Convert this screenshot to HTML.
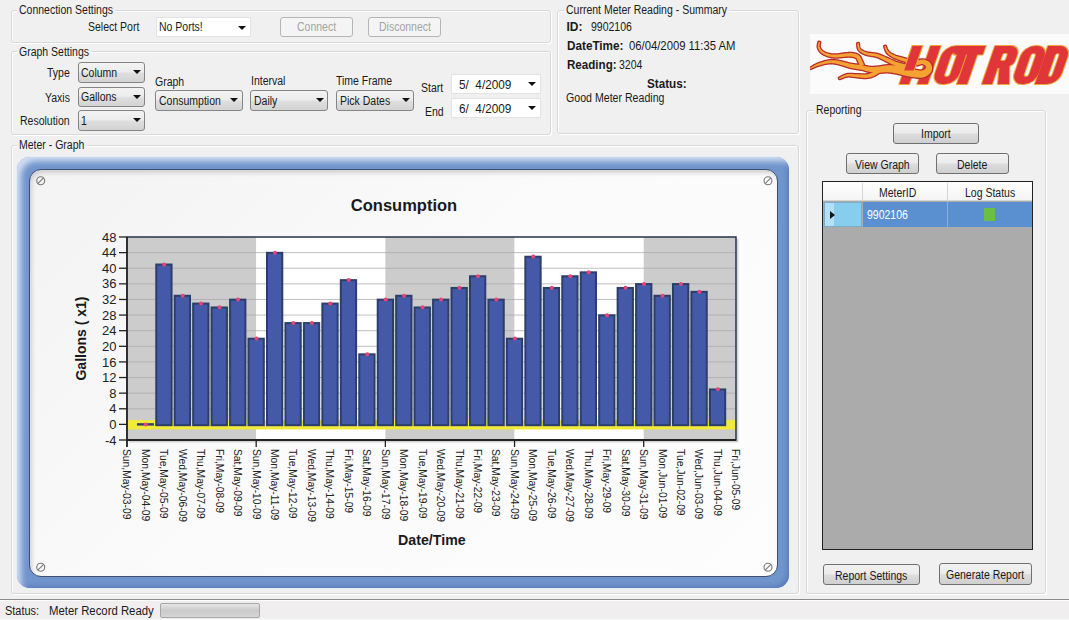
<!DOCTYPE html>
<html><head><meta charset="utf-8">
<style>
*{box-sizing:border-box;margin:0;padding:0}
html,body{width:1069px;height:620px;overflow:hidden;background:#f0f0f0;font-family:"Liberation Sans",sans-serif;font-size:12px;color:#1a1a1a}
.a{position:absolute}
.grp{position:absolute;border:1px solid #d8d8d8;border-radius:3px;box-shadow:inset 1px 1px 0 #fff, 1px 1px 0 #fff}
.t{position:absolute;white-space:nowrap;line-height:12px;transform-origin:0 0}
.cb{position:absolute;border:1px solid #858585;border-radius:3px;background:linear-gradient(#f3f3f3,#ececec 45%,#dedede 55%,#d3d3d3);}
.cbw{position:absolute;border:1px solid #e3e3e3;background:#fff}
.arr{position:absolute;width:0;height:0;border-left:4px solid transparent;border-right:4px solid transparent;border-top:4.5px solid #111}
.btn{position:absolute;border:1px solid #707070;border-radius:3px;background:linear-gradient(#f2f2f2,#ebebeb 48%,#dddddd 52%,#cfcfcf)}
.btnd{position:absolute;border:1px solid #b5b5b5;border-radius:3px;background:#f4f4f4}
</style></head><body>
<div class="grp" style="left:11px;top:10px;width:540px;height:33px;"></div>
<div class="grp" style="left:11px;top:51px;width:540px;height:84px;"></div>
<div class="grp" style="left:557px;top:10px;width:242px;height:124px;"></div>
<div class="grp" style="left:11px;top:145px;width:788px;height:449px;"></div>
<div class="grp" style="left:806px;top:110px;width:240px;height:484px;"></div>
<div class="a" style="left:16.8px;top:3.7px;width:98.0px;height:12px;background:#f0f0f0"></div>
<div class="t" style="left:18.80px;top:4.20px;transform:scaleX(0.875)">Connection Settings</div>
<div class="a" style="left:17.0px;top:45.8px;width:74.0px;height:12px;background:#f0f0f0"></div>
<div class="t" style="left:19.00px;top:46.30px;transform:scaleX(0.875)">Graph Settings</div>
<div class="a" style="left:563.8px;top:3.9px;width:165.0px;height:12px;background:#f0f0f0"></div>
<div class="t" style="left:565.80px;top:4.40px;transform:scaleX(0.875)">Current Meter Reading - Summary</div>
<div class="a" style="left:17.4px;top:138.8px;width:69.3px;height:12px;background:#f0f0f0"></div>
<div class="t" style="left:19.40px;top:139.30px;transform:scaleX(0.875)">Meter - Graph</div>
<div class="a" style="left:813.6px;top:103.9px;width:49.5px;height:12px;background:#f0f0f0"></div>
<div class="t" style="left:815.60px;top:104.40px;transform:scaleX(0.875)">Reporting</div>
<div class="t" style="left:88.00px;top:21.10px;transform:scaleX(0.875)">Select Port</div>
<div class="cbw" style="left:156px;top:17px;width:95px;height:20px;"></div>
<div class="t" style="left:159.20px;top:21.10px;transform:scaleX(0.875)">No Ports!</div>
<div class="arr" style="left:238.4px;top:25.6px;border-top-color:#111"></div>
<div class="btnd" style="left:280px;top:17px;width:73px;height:20px;"></div>
<div class="t" style="left:296.95px;top:21.00px;transform:scaleX(0.875);color:#a3a3a3">Connect</div>
<div class="btnd" style="left:368px;top:17px;width:73px;height:20px;"></div>
<div class="t" style="left:378.53px;top:21.00px;transform:scaleX(0.875);color:#a3a3a3">Disconnect</div>
<div class="t" style="left:47.44px;top:66.90px;transform:scaleX(0.875)">Type</div>
<div class="t" style="left:45.30px;top:91.90px;transform:scaleX(0.875)">Yaxis</div>
<div class="t" style="left:20.18px;top:115.20px;transform:scaleX(0.875)">Resolution</div>
<div class="cb" style="left:78px;top:62px;width:67px;height:21px;"></div>
<div class="t" style="left:81.40px;top:66.90px;transform:scaleX(0.875)">Column</div>
<div class="arr" style="left:132.5px;top:70.3px;border-top-color:#111"></div>
<div class="cb" style="left:78px;top:87px;width:67px;height:20px;"></div>
<div class="t" style="left:81.40px;top:90.90px;transform:scaleX(0.875)">Gallons</div>
<div class="arr" style="left:132.5px;top:94.8px;border-top-color:#111"></div>
<div class="cb" style="left:78px;top:110px;width:67px;height:21px;"></div>
<div class="t" style="left:81.40px;top:114.90px;transform:scaleX(0.875)">1</div>
<div class="arr" style="left:132.5px;top:118.3px;border-top-color:#111"></div>
<div class="t" style="left:154.80px;top:75.50px;transform:scaleX(0.875)">Graph</div>
<div class="cb" style="left:155px;top:90px;width:88px;height:21px;"></div>
<div class="t" style="left:158.60px;top:95.00px;transform:scaleX(0.875)">Consumption</div>
<div class="arr" style="left:230.2px;top:98.3px;border-top-color:#111"></div>
<div class="t" style="left:250.50px;top:75.00px;transform:scaleX(0.875)">Interval</div>
<div class="cb" style="left:250px;top:90px;width:78px;height:21px;"></div>
<div class="t" style="left:254.00px;top:95.00px;transform:scaleX(0.875)">Daily</div>
<div class="arr" style="left:315.5px;top:98.3px;border-top-color:#111"></div>
<div class="t" style="left:336.40px;top:75.00px;transform:scaleX(0.875)">Time Frame</div>
<div class="cb" style="left:336px;top:90px;width:78px;height:21px;"></div>
<div class="t" style="left:340.00px;top:95.00px;transform:scaleX(0.875)">Pick Dates</div>
<div class="arr" style="left:401.5px;top:98.3px;border-top-color:#111"></div>
<div class="t" style="left:421.44px;top:81.80px;transform:scaleX(0.875)">Start</div>
<div class="t" style="left:424.92px;top:105.80px;transform:scaleX(0.875)">End</div>
<div class="cbw" style="left:451px;top:74px;width:90px;height:20px;"></div>
<div class="t" style="left:458.60px;top:78.90px;transform:scaleX(0.98)">5/&nbsp; 4/2009</div>
<div class="arr" style="left:527.5px;top:81.8px;border-top-color:#111"></div>
<div class="cbw" style="left:451px;top:98px;width:90px;height:20px;"></div>
<div class="t" style="left:458.60px;top:102.80px;transform:scaleX(0.98)">6/&nbsp; 4/2009</div>
<div class="arr" style="left:527.5px;top:105.8px;border-top-color:#111"></div>
<div class="t" style="left:566.50px;top:20.90px;transform:scaleX(1.0);font-weight:bold">ID:</div>
<div class="t" style="left:590.90px;top:20.90px;transform:scaleX(0.875)">9902106</div>
<div class="t" style="left:566.50px;top:40.40px;transform:scaleX(0.977);font-weight:bold">DateTime:</div>
<div class="t" style="left:629.00px;top:40.40px;transform:scaleX(0.94)">06/04/2009 11:35 AM</div>
<div class="t" style="left:566.50px;top:59.10px;transform:scaleX(0.966);font-weight:bold">Reading:</div>
<div class="t" style="left:619.30px;top:59.10px;transform:scaleX(0.875)">3204</div>
<div class="t" style="left:647.30px;top:78.00px;transform:scaleX(0.974);font-weight:bold">Status:</div>
<div class="t" style="left:565.80px;top:92.20px;transform:scaleX(0.884)">Good Meter Reading</div>
<div class="btn" style="left:893px;top:123px;width:86px;height:21px;"></div>
<div class="t" style="left:921.12px;top:128.30px;transform:scaleX(0.875)">Import</div>
<div class="btn" style="left:846px;top:153px;width:73px;height:21px;"></div>
<div class="t" style="left:855.17px;top:158.50px;transform:scaleX(0.875)">View Graph</div>
<div class="btn" style="left:936px;top:153px;width:73px;height:21px;"></div>
<div class="t" style="left:957.32px;top:158.50px;transform:scaleX(0.875)">Delete</div>
<div class="a" style="left:822px;top:181px;width:211px;height:369px;background:#ababab;border:1px solid #222"></div>
<div class="a" style="left:823px;top:182px;width:209px;height:19px;background:linear-gradient(#ffffff,#f4f4f4);border-bottom:1px solid #d5d5d5"></div>
<div class="a" style="left:862px;top:183px;width:1px;height:17px;background:#d5d5d5"></div>
<div class="a" style="left:947px;top:183px;width:1px;height:17px;background:#d5d5d5"></div>
<div class="t" style="left:878.50px;top:187.40px;transform:scaleX(0.875)">MeterID</div>
<div class="t" style="left:964.80px;top:187.40px;transform:scaleX(0.875)">Log Status</div>
<div class="a" style="left:824px;top:202px;width:38px;height:25px;background:#86cdee;border:1px solid #7aaec8"></div>
<div class="a" style="left:825px;top:203px;width:9px;height:23px;background:#b2e0f6"></div>
<div class="a" style="left:830px;top:210.5px;width:0;height:0;border-top:4.5px solid transparent;border-bottom:4.5px solid transparent;border-left:5.5px solid #151515"></div>
<div class="a" style="left:863px;top:202px;width:169px;height:25px;background:#5a90d0"></div>
<div class="a" style="left:947px;top:202px;width:1px;height:25px;background:#8ab0dc"></div>
<div class="t" style="left:866.70px;top:209.30px;transform:scaleX(0.875);color:#fff">9902106</div>
<div class="a" style="left:984px;top:208px;width:11px;height:13px;background:#6cbf45"></div>
<div class="btn" style="left:823px;top:564px;width:97px;height:21px;"></div>
<div class="t" style="left:835.32px;top:569.60px;transform:scaleX(0.875)">Report Settings</div>
<div class="btn" style="left:939px;top:563px;width:93px;height:22px;"></div>
<div class="t" style="left:946.41px;top:568.90px;transform:scaleX(0.875)">Generate Report</div>
<div class="a" style="left:0px;top:599px;width:1069px;height:1px;background:#8c8c8c"></div>
<div class="a" style="left:0px;top:600px;width:1069px;height:20px;background:#f0eeee"></div>
<div class="a" style="left:0px;top:600px;width:1069px;height:1px;background:#fcfcfc"></div>
<div class="a" style="left:0px;top:619px;width:1069px;height:1px;background:#fafafa"></div>
<div class="t" style="left:4.50px;top:605.30px;transform:scaleX(0.913)">Status:</div>
<div class="t" style="left:49.40px;top:605.30px;transform:scaleX(0.946)">Meter Record Ready</div>
<div class="a" style="left:160px;top:603px;width:100px;height:15px;border:1px solid #a8a8a8;border-radius:2px;background:linear-gradient(#e6e6e6,#cbcbcb 50%,#d6d6d6)"></div>
<div class="a" style="left:810px;top:34px;width:259px;height:60px;background:#fbfbfb"></div>
<svg class="a" style="left:810px;top:34px" width="259" height="60" viewBox="0 0 259 60"><g transform="translate(0,50) skewX(-19) translate(0,-50)" fill-rule="evenodd"><g fill="#f3a43a" stroke="#f3a43a" stroke-width="2.2" stroke-linejoin="round"><path d="M89.50,12 H99.00 V50 H89.50 Z"/><path d="M107.50,12 H117.50 V50 H107.50 Z"/><path d="M132.50,12 H135.00 A11,11 0 0 1 146.00,23 V39 A11,11 0 0 1 135.00,50 H132.50 A11,11 0 0 1 121.50,39 V23 A11,11 0 0 1 132.50,12 Z M134.00,19 H134.00 A3,3 0 0 1 137.00,22 V40 A3,3 0 0 1 134.00,43 H134.00 A3,3 0 0 1 131.00,40 V22 A3,3 0 0 1 134.00,19 Z"/><path d="M134.00,12 H162.50 V20.5 H134.00 Z"/><path d="M147.00,12 H157.00 V50 H147.00 Z"/><path d="M172,50 V12 H188 A9,9 0 0 1 197,21 V27 A6,6 0 0 1 193,32 L199,50 H188 L184,34 H182 V50 Z M184.00,19 H185.50 A2,2 0 0 1 187.50,21 V25 A2,2 0 0 1 185.50,27 H184.00 A2,2 0 0 1 182.00,25 V21 A2,2 0 0 1 184.00,19 Z"/><path d="M212.00,12 H214.00 A11,11 0 0 1 225.00,23 V39 A11,11 0 0 1 214.00,50 H212.00 A11,11 0 0 1 201.00,39 V23 A11,11 0 0 1 212.00,12 Z M213.50,19 H213.00 A3,3 0 0 1 216.00,22 V40 A3,3 0 0 1 213.00,43 H213.50 A3,3 0 0 1 210.50,40 V22 A3,3 0 0 1 213.50,19 Z"/><path d="M225,12 H237 A11,11 0 0 1 248,23 V39 A11,11 0 0 1 237,50 H225 Z M237.50,19 H237.00 A2.5,2.5 0 0 1 239.50,21.5 V40.5 A2.5,2.5 0 0 1 237.00,43 H237.50 A2.5,2.5 0 0 1 235.00,40.5 V21.5 A2.5,2.5 0 0 1 237.50,19 Z"/></g><g fill="#e0363a"><path d="M89.50,12 H99.00 V50 H89.50 Z"/><path d="M107.50,12 H117.50 V50 H107.50 Z"/><path d="M132.50,12 H135.00 A11,11 0 0 1 146.00,23 V39 A11,11 0 0 1 135.00,50 H132.50 A11,11 0 0 1 121.50,39 V23 A11,11 0 0 1 132.50,12 Z M134.00,19 H134.00 A3,3 0 0 1 137.00,22 V40 A3,3 0 0 1 134.00,43 H134.00 A3,3 0 0 1 131.00,40 V22 A3,3 0 0 1 134.00,19 Z"/><path d="M134.00,12 H162.50 V20.5 H134.00 Z"/><path d="M147.00,12 H157.00 V50 H147.00 Z"/><path d="M172,50 V12 H188 A9,9 0 0 1 197,21 V27 A6,6 0 0 1 193,32 L199,50 H188 L184,34 H182 V50 Z M184.00,19 H185.50 A2,2 0 0 1 187.50,21 V25 A2,2 0 0 1 185.50,27 H184.00 A2,2 0 0 1 182.00,25 V21 A2,2 0 0 1 184.00,19 Z"/><path d="M212.00,12 H214.00 A11,11 0 0 1 225.00,23 V39 A11,11 0 0 1 214.00,50 H212.00 A11,11 0 0 1 201.00,39 V23 A11,11 0 0 1 212.00,12 Z M213.50,19 H213.00 A3,3 0 0 1 216.00,22 V40 A3,3 0 0 1 213.00,43 H213.50 A3,3 0 0 1 210.50,40 V22 A3,3 0 0 1 213.50,19 Z"/><path d="M225,12 H237 A11,11 0 0 1 248,23 V39 A11,11 0 0 1 237,50 H225 Z M237.50,19 H237.00 A2.5,2.5 0 0 1 239.50,21.5 V40.5 A2.5,2.5 0 0 1 237.00,43 H237.50 A2.5,2.5 0 0 1 235.00,40.5 V21.5 A2.5,2.5 0 0 1 237.50,19 Z"/></g></g><g fill="#b82c2a" stroke="#b82c2a" stroke-width="2.6" stroke-linejoin="round"><path d="M8.71,7.89 L8.65,8.11 L8.57,8.40 L8.47,8.76 L8.35,9.18 L8.22,9.64 L8.10,10.13 L7.98,10.65 L7.89,11.19 L7.82,11.75 L7.80,12.31 L7.83,12.88 L7.92,13.42 L8.06,13.92 L8.22,14.41 L8.42,14.91 L8.65,15.40 L8.90,15.89 L9.19,16.38 L9.51,16.86 L9.85,17.33 L10.23,17.79 L10.64,18.23 L11.07,18.66 L11.54,19.06 L12.05,19.44 L12.60,19.81 L13.18,20.16 L13.79,20.49 L14.42,20.81 L15.06,21.11 L15.72,21.39 L16.38,21.66 L17.05,21.91 L17.70,22.14 L18.34,22.35 L18.97,22.54 L19.58,22.71 L20.17,22.86 L20.75,22.99 L21.33,23.10 L21.92,23.19 L22.50,23.27 L23.10,23.33 L23.72,23.37 L24.35,23.41 L25.01,23.43 L25.70,23.44 L26.44,23.45 L27.26,23.43 L28.13,23.38 L29.05,23.31 L29.99,23.23 L30.94,23.13 L31.91,23.03 L32.86,22.92 L33.80,22.82 L34.71,22.74 L35.56,22.66 L36.36,22.61 L37.09,22.58 L37.78,22.56 L38.45,22.56 L39.09,22.56 L39.71,22.57 L40.29,22.59 L40.85,22.62 L41.37,22.65 L41.87,22.70 L42.35,22.76 L42.80,22.82 L43.22,22.90 L43.63,22.99 L44.00,23.08 L44.35,23.18 L44.66,23.29 L44.95,23.41 L45.21,23.53 L45.46,23.65 L45.68,23.78 L45.89,23.92 L46.09,24.07 L46.29,24.23 L46.48,24.40 L46.65,24.56 L46.78,24.71 L46.89,24.86 L47.00,25.03 L47.11,25.24 L47.22,25.48 L47.34,25.74 L47.46,26.04 L47.58,26.36 L47.71,26.71 L47.86,27.08 L48.02,27.47 L48.19,27.85 L48.35,28.22 L48.52,28.60 L48.70,29.01 L48.88,29.44 L49.06,29.88 L49.24,30.31 L49.41,30.73 L49.58,31.13 L49.73,31.50 L49.87,31.83 L49.98,32.12 L50.08,32.35 L53.92,30.65 L53.82,30.44 L53.70,30.17 L53.55,29.85 L53.39,29.48 L53.20,29.08 L53.01,28.66 L52.81,28.23 L52.60,27.79 L52.40,27.35 L52.19,26.92 L52.00,26.51 L51.81,26.15 L51.66,25.84 L51.52,25.53 L51.38,25.21 L51.23,24.87 L51.08,24.51 L50.91,24.14 L50.73,23.76 L50.52,23.38 L50.29,22.98 L50.01,22.59 L49.69,22.19 L49.35,21.84 L49.01,21.53 L48.68,21.26 L48.33,21.00 L47.96,20.75 L47.57,20.52 L47.17,20.31 L46.75,20.12 L46.31,19.94 L45.85,19.78 L45.38,19.64 L44.89,19.52 L44.37,19.41 L43.84,19.32 L43.30,19.25 L42.74,19.19 L42.17,19.14 L41.58,19.11 L40.98,19.10 L40.36,19.09 L39.72,19.10 L39.05,19.11 L38.37,19.14 L37.66,19.18 L36.91,19.22 L36.10,19.29 L35.24,19.39 L34.34,19.50 L33.41,19.63 L32.46,19.78 L31.50,19.92 L30.56,20.07 L29.63,20.20 L28.73,20.32 L27.88,20.43 L27.09,20.51 L26.36,20.55 L25.67,20.58 L25.02,20.60 L24.41,20.61 L23.83,20.60 L23.29,20.59 L22.76,20.56 L22.25,20.52 L21.74,20.46 L21.23,20.39 L20.72,20.30 L20.18,20.19 L19.63,20.06 L19.05,19.92 L18.45,19.75 L17.83,19.57 L17.21,19.37 L16.59,19.16 L15.97,18.93 L15.38,18.69 L14.80,18.43 L14.25,18.17 L13.74,17.90 L13.28,17.62 L12.86,17.34 L12.48,17.05 L12.11,16.73 L11.76,16.39 L11.44,16.03 L11.13,15.66 L10.85,15.28 L10.59,14.90 L10.35,14.50 L10.14,14.11 L9.96,13.72 L9.80,13.34 L9.68,12.98 L9.60,12.64 L9.55,12.26 L9.54,11.84 L9.56,11.38 L9.61,10.92 L9.68,10.44 L9.76,9.98 L9.85,9.54 L9.93,9.12 L10.00,8.73 L10.06,8.39 L10.09,8.11 Z"/><path d="M0.32,34.95 L0.76,34.80 L1.30,34.58 L1.91,34.31 L2.58,34.01 L3.32,33.67 L4.10,33.32 L4.91,32.96 L5.75,32.61 L6.59,32.26 L7.43,31.93 L8.25,31.64 L9.05,31.38 L9.86,31.14 L10.72,30.90 L11.61,30.67 L12.53,30.45 L13.46,30.23 L14.39,30.03 L15.32,29.84 L16.23,29.67 L17.11,29.52 L17.95,29.39 L18.75,29.28 L19.48,29.20 L20.15,29.15 L20.78,29.12 L21.36,29.12 L21.91,29.13 L22.44,29.16 L22.96,29.21 L23.47,29.27 L23.98,29.34 L24.50,29.42 L25.03,29.51 L25.59,29.61 L26.16,29.71 L26.72,29.81 L27.27,29.93 L27.82,30.06 L28.38,30.20 L28.95,30.36 L29.52,30.52 L30.09,30.69 L30.67,30.86 L31.26,31.04 L31.84,31.22 L32.44,31.39 L33.03,31.57 L33.60,31.74 L34.17,31.92 L34.74,32.10 L35.32,32.29 L35.90,32.49 L36.49,32.68 L37.09,32.88 L37.69,33.07 L38.30,33.26 L38.92,33.44 L39.54,33.61 L40.17,33.77 L40.80,33.92 L41.45,34.06 L42.09,34.19 L42.74,34.31 L43.39,34.43 L44.03,34.54 L44.65,34.64 L45.26,34.74 L45.84,34.83 L46.39,34.92 L46.91,35.00 L47.40,35.08 L47.88,35.15 L48.35,35.23 L48.80,35.29 L49.24,35.36 L49.66,35.41 L50.05,35.47 L50.42,35.51 L50.75,35.56 L51.06,35.60 L51.32,35.63 L51.55,35.66 L51.74,35.69 L52.26,31.11 L52.05,31.10 L51.80,31.08 L51.53,31.05 L51.23,31.03 L50.89,31.00 L50.54,30.97 L50.16,30.94 L49.76,30.90 L49.34,30.86 L48.91,30.82 L48.46,30.77 L48.00,30.72 L47.50,30.67 L46.96,30.61 L46.41,30.55 L45.83,30.49 L45.23,30.42 L44.62,30.35 L44.01,30.28 L43.40,30.20 L42.79,30.11 L42.19,30.02 L41.60,29.93 L41.03,29.83 L40.48,29.71 L39.92,29.59 L39.35,29.45 L38.78,29.31 L38.19,29.15 L37.61,28.99 L37.01,28.83 L36.41,28.66 L35.81,28.50 L35.20,28.34 L34.58,28.18 L33.97,28.03 L33.38,27.89 L32.79,27.75 L32.19,27.60 L31.60,27.46 L30.99,27.31 L30.38,27.17 L29.77,27.03 L29.15,26.90 L28.53,26.78 L27.90,26.67 L27.26,26.57 L26.64,26.49 L26.05,26.42 L25.48,26.36 L24.92,26.29 L24.35,26.24 L23.77,26.19 L23.18,26.16 L22.57,26.14 L21.94,26.14 L21.28,26.16 L20.60,26.21 L19.88,26.29 L19.12,26.40 L18.32,26.54 L17.47,26.71 L16.59,26.90 L15.68,27.12 L14.74,27.36 L13.80,27.62 L12.85,27.89 L11.90,28.18 L10.97,28.48 L10.07,28.79 L9.19,29.10 L8.35,29.42 L7.52,29.77 L6.67,30.16 L5.83,30.57 L4.99,31.01 L4.17,31.46 L3.38,31.90 L2.63,32.34 L1.93,32.76 L1.29,33.14 L0.73,33.49 L0.25,33.79 L-0.12,34.05 Z"/><path d="M29.44,45.05 L29.85,44.93 L30.35,44.75 L30.93,44.52 L31.56,44.26 L32.25,43.97 L32.97,43.68 L33.71,43.39 L34.46,43.12 L35.20,42.87 L35.92,42.65 L36.59,42.49 L37.20,42.38 L37.79,42.32 L38.36,42.29 L38.93,42.29 L39.51,42.33 L40.10,42.38 L40.70,42.45 L41.33,42.54 L41.98,42.63 L42.66,42.73 L43.38,42.83 L44.14,42.92 L44.92,42.99 L45.72,43.06 L46.57,43.15 L47.47,43.26 L48.40,43.37 L49.36,43.48 L50.33,43.59 L51.31,43.70 L52.28,43.79 L53.23,43.86 L54.16,43.92 L55.06,43.94 L55.91,43.92 L56.70,43.88 L57.46,43.81 L58.19,43.71 L58.89,43.60 L59.56,43.46 L60.20,43.31 L60.82,43.14 L61.42,42.97 L62.00,42.78 L62.56,42.58 L63.10,42.39 L63.66,42.18 L64.24,41.93 L64.82,41.65 L65.36,41.35 L65.87,41.05 L66.36,40.74 L66.81,40.44 L67.24,40.14 L67.65,39.87 L68.02,39.61 L68.38,39.39 L68.70,39.20 L69.00,39.03 L69.33,38.88 L69.68,38.72 L70.04,38.57 L70.40,38.42 L70.76,38.28 L71.11,38.15 L71.45,38.03 L71.78,37.92 L72.08,37.81 L72.36,37.71 L72.62,37.62 L72.83,37.54 L71.17,33.46 L71.00,33.54 L70.79,33.62 L70.53,33.73 L70.23,33.85 L69.89,33.99 L69.53,34.15 L69.13,34.31 L68.73,34.50 L68.31,34.69 L67.88,34.90 L67.44,35.12 L67.00,35.37 L66.54,35.64 L66.10,35.94 L65.67,36.24 L65.26,36.55 L64.87,36.85 L64.47,37.15 L64.09,37.44 L63.70,37.71 L63.32,37.97 L62.94,38.21 L62.56,38.42 L62.14,38.62 L61.68,38.83 L61.19,39.03 L60.71,39.23 L60.22,39.42 L59.72,39.60 L59.21,39.77 L58.69,39.92 L58.14,40.06 L57.58,40.19 L56.98,40.30 L56.35,40.40 L55.69,40.48 L54.98,40.53 L54.20,40.56 L53.36,40.56 L52.46,40.54 L51.53,40.51 L50.58,40.47 L49.62,40.42 L48.66,40.37 L47.71,40.31 L46.79,40.27 L45.91,40.23 L45.08,40.21 L44.33,40.19 L43.62,40.16 L42.93,40.11 L42.26,40.06 L41.59,40.02 L40.92,39.97 L40.26,39.94 L39.59,39.93 L38.91,39.95 L38.22,40.00 L37.52,40.09 L36.80,40.22 L36.05,40.42 L35.28,40.68 L34.50,40.99 L33.73,41.34 L32.97,41.70 L32.23,42.08 L31.53,42.46 L30.87,42.83 L30.27,43.17 L29.74,43.48 L29.30,43.73 L28.96,43.95 Z"/><path d="M47.31,9.32 L47.34,9.60 L47.35,9.97 L47.37,10.43 L47.39,10.96 L47.42,11.54 L47.47,12.16 L47.55,12.81 L47.65,13.46 L47.80,14.12 L48.01,14.77 L48.28,15.39 L48.63,15.96 L49.02,16.46 L49.44,16.93 L49.89,17.37 L50.39,17.79 L50.91,18.19 L51.47,18.57 L52.06,18.94 L52.68,19.29 L53.32,19.62 L53.99,19.93 L54.69,20.23 L55.43,20.52 L56.23,20.79 L57.10,21.02 L58.01,21.23 L58.95,21.41 L59.91,21.58 L60.88,21.73 L61.84,21.88 L62.78,22.03 L63.69,22.19 L64.54,22.35 L65.33,22.52 L66.04,22.71 L66.70,22.91 L67.33,23.12 L67.92,23.34 L68.49,23.57 L69.03,23.80 L69.56,24.03 L70.09,24.28 L70.61,24.53 L71.15,24.78 L71.69,25.05 L72.26,25.32 L72.84,25.59 L73.41,25.87 L73.98,26.14 L74.55,26.43 L75.12,26.73 L75.70,27.03 L76.28,27.34 L76.87,27.65 L77.46,27.95 L78.05,28.26 L78.65,28.57 L79.26,28.86 L79.86,29.15 L80.44,29.43 L80.99,29.69 L81.54,29.95 L82.09,30.21 L82.65,30.47 L83.21,30.73 L83.79,30.99 L84.39,31.24 L85.01,31.50 L85.67,31.76 L86.36,32.02 L87.09,32.28 L87.90,32.55 L88.79,32.84 L89.74,33.13 L90.74,33.43 L91.75,33.72 L92.76,34.01 L93.74,34.29 L94.68,34.55 L95.54,34.79 L96.30,35.00 L96.94,35.18 L97.43,35.33 L98.57,31.07 L98.05,30.95 L97.39,30.79 L96.61,30.61 L95.74,30.40 L94.81,30.18 L93.83,29.95 L92.82,29.71 L91.82,29.46 L90.84,29.21 L89.91,28.97 L89.06,28.74 L88.31,28.52 L87.64,28.31 L86.99,28.10 L86.39,27.89 L85.80,27.68 L85.24,27.46 L84.69,27.25 L84.15,27.03 L83.60,26.80 L83.06,26.57 L82.50,26.34 L81.93,26.09 L81.34,25.85 L80.76,25.60 L80.18,25.34 L79.60,25.08 L79.01,24.81 L78.42,24.53 L77.82,24.25 L77.22,23.97 L76.61,23.69 L76.00,23.41 L75.39,23.13 L74.77,22.86 L74.16,22.61 L73.58,22.36 L73.02,22.13 L72.47,21.89 L71.91,21.65 L71.35,21.41 L70.77,21.18 L70.18,20.95 L69.57,20.72 L68.92,20.50 L68.24,20.29 L67.53,20.09 L66.76,19.89 L65.93,19.71 L65.03,19.56 L64.11,19.44 L63.16,19.32 L62.19,19.22 L61.23,19.12 L60.28,19.01 L59.35,18.90 L58.46,18.78 L57.63,18.63 L56.86,18.47 L56.17,18.28 L55.52,18.06 L54.87,17.83 L54.25,17.58 L53.66,17.32 L53.11,17.05 L52.58,16.76 L52.09,16.47 L51.63,16.16 L51.21,15.84 L50.82,15.51 L50.47,15.17 L50.17,14.84 L49.93,14.49 L49.71,14.08 L49.53,13.60 L49.37,13.07 L49.24,12.51 L49.13,11.94 L49.04,11.37 L48.96,10.82 L48.90,10.30 L48.83,9.83 L48.77,9.41 L48.69,9.08 Z"/><path d="M74.26,12.27 L74.35,12.57 L74.47,12.95 L74.61,13.42 L74.77,13.95 L74.95,14.53 L75.16,15.14 L75.39,15.78 L75.65,16.43 L75.94,17.07 L76.27,17.70 L76.64,18.30 L77.05,18.85 L77.47,19.33 L77.91,19.79 L78.37,20.23 L78.86,20.65 L79.37,21.05 L79.91,21.44 L80.47,21.82 L81.06,22.19 L81.67,22.56 L82.31,22.91 L82.98,23.27 L83.69,23.63 L84.46,23.99 L85.30,24.35 L86.19,24.71 L87.12,25.06 L88.07,25.41 L89.03,25.75 L90.00,26.08 L90.95,26.39 L91.88,26.69 L92.77,26.97 L93.60,27.24 L94.38,27.48 L95.10,27.71 L95.78,27.92 L96.44,28.11 L97.06,28.29 L97.67,28.46 L98.26,28.61 L98.85,28.75 L99.42,28.88 L100.00,29.00 L100.58,29.12 L101.18,29.22 L101.79,29.32 L102.45,29.40 L103.14,29.47 L103.85,29.53 L104.56,29.57 L105.26,29.60 L105.94,29.63 L106.59,29.64 L107.20,29.66 L107.76,29.67 L108.25,29.68 L108.65,29.69 L108.97,29.70 L109.03,25.90 L108.68,25.90 L108.24,25.91 L107.74,25.93 L107.18,25.94 L106.59,25.96 L105.96,25.97 L105.32,25.98 L104.66,25.98 L104.01,25.98 L103.38,25.96 L102.77,25.93 L102.21,25.88 L101.66,25.82 L101.12,25.76 L100.59,25.68 L100.06,25.60 L99.53,25.51 L98.99,25.40 L98.43,25.29 L97.86,25.16 L97.25,25.02 L96.62,24.87 L95.94,24.70 L95.22,24.52 L94.44,24.32 L93.60,24.10 L92.70,23.86 L91.78,23.62 L90.83,23.36 L89.87,23.09 L88.92,22.81 L87.98,22.53 L87.08,22.24 L86.22,21.95 L85.43,21.66 L84.71,21.37 L84.03,21.08 L83.39,20.79 L82.77,20.49 L82.20,20.20 L81.65,19.90 L81.13,19.59 L80.64,19.28 L80.18,18.96 L79.74,18.63 L79.32,18.28 L78.92,17.92 L78.55,17.55 L78.21,17.16 L77.89,16.71 L77.58,16.21 L77.28,15.66 L77.00,15.09 L76.74,14.52 L76.50,13.95 L76.28,13.41 L76.07,12.90 L75.88,12.44 L75.70,12.04 L75.54,11.73 Z"/><path d="M49.51,34.94 L49.98,35.10 L50.58,35.30 L51.29,35.54 L52.11,35.80 L53.00,36.08 L53.94,36.37 L54.91,36.66 L55.90,36.94 L56.88,37.22 L57.85,37.47 L58.77,37.69 L59.63,37.87 L60.43,38.02 L61.18,38.14 L61.91,38.25 L62.61,38.33 L63.30,38.40 L63.98,38.45 L64.65,38.49 L65.32,38.52 L65.99,38.55 L66.67,38.56 L67.37,38.58 L68.13,38.60 L68.95,38.60 L69.81,38.58 L70.67,38.54 L71.53,38.49 L72.38,38.43 L73.23,38.38 L74.07,38.33 L74.90,38.29 L75.71,38.26 L76.49,38.25 L77.24,38.26 L77.98,38.30 L78.73,38.36 L79.52,38.43 L80.31,38.52 L81.11,38.62 L81.92,38.73 L82.73,38.85 L83.53,38.99 L84.32,39.13 L85.10,39.28 L85.87,39.43 L86.62,39.59 L87.32,39.74 L87.97,39.86 L88.58,39.99 L89.18,40.12 L89.78,40.27 L90.37,40.43 L90.98,40.60 L91.60,40.78 L92.25,40.96 L92.92,41.15 L93.62,41.34 L94.36,41.52 L95.10,41.70 L95.84,41.84 L96.57,41.99 L97.33,42.14 L98.10,42.30 L98.89,42.45 L99.69,42.60 L100.50,42.75 L101.31,42.89 L102.13,43.02 L102.94,43.14 L103.76,43.24 L104.53,43.32 L105.26,43.39 L105.98,43.45 L106.71,43.52 L107.46,43.58 L108.22,43.63 L109.00,43.67 L109.79,43.68 L110.59,43.67 L111.40,43.63 L112.23,43.54 L113.06,43.39 L113.89,43.19 L114.68,42.92 L115.43,42.62 L116.16,42.28 L116.87,41.90 L117.54,41.48 L118.20,41.04 L118.82,40.56 L119.40,40.04 L119.96,39.49 L120.47,38.90 L120.95,38.26 L121.37,37.53 L121.69,36.73 L121.89,35.92 L122.01,35.13 L122.04,34.36 L122.01,33.61 L121.92,32.87 L121.78,32.16 L121.58,31.46 L121.33,30.78 L121.03,30.12 L120.66,29.48 L120.21,28.87 L119.69,28.31 L119.13,27.83 L118.55,27.41 L117.94,27.05 L117.31,26.73 L116.67,26.45 L116.02,26.20 L115.36,25.99 L114.69,25.82 L114.03,25.69 L113.36,25.60 L112.66,25.56 L111.89,25.57 L111.14,25.66 L110.42,25.82 L109.73,26.02 L109.07,26.24 L108.44,26.48 L107.85,26.72 L107.30,26.96 L106.82,27.18 L106.41,27.36 L106.11,27.50 L105.87,27.60 L107.13,31.40 L107.47,31.31 L107.90,31.17 L108.36,31.01 L108.84,30.83 L109.35,30.65 L109.88,30.48 L110.40,30.32 L110.90,30.19 L111.37,30.09 L111.78,30.03 L112.10,30.02 L112.34,30.04 L112.62,30.12 L112.98,30.24 L113.36,30.38 L113.75,30.55 L114.14,30.74 L114.51,30.95 L114.86,31.18 L115.17,31.41 L115.43,31.64 L115.62,31.85 L115.74,32.02 L115.79,32.13 L115.81,32.25 L115.86,32.43 L115.90,32.66 L115.94,32.92 L115.95,33.20 L115.95,33.49 L115.93,33.76 L115.88,34.01 L115.82,34.22 L115.75,34.38 L115.68,34.46 L115.63,34.47 L115.57,34.52 L115.45,34.65 L115.25,34.83 L115.00,35.04 L114.70,35.26 L114.37,35.48 L114.00,35.69 L113.62,35.89 L113.22,36.06 L112.83,36.21 L112.45,36.33 L112.11,36.41 L111.79,36.47 L111.42,36.50 L111.00,36.51 L110.52,36.51 L110.00,36.48 L109.44,36.43 L108.84,36.37 L108.21,36.29 L107.55,36.19 L106.86,36.09 L106.16,35.98 L105.47,35.88 L104.81,35.77 L104.15,35.65 L103.47,35.51 L102.76,35.36 L102.04,35.20 L101.31,35.02 L100.57,34.84 L99.82,34.65 L99.08,34.46 L98.34,34.27 L97.60,34.08 L96.90,33.90 L96.25,33.75 L95.64,33.60 L95.03,33.43 L94.42,33.26 L93.79,33.08 L93.14,32.90 L92.48,32.71 L91.78,32.53 L91.05,32.35 L90.29,32.17 L89.49,32.00 L88.68,31.86 L87.86,31.77 L87.03,31.68 L86.18,31.60 L85.31,31.52 L84.42,31.46 L83.52,31.40 L82.62,31.35 L81.70,31.31 L80.78,31.28 L79.86,31.27 L78.95,31.28 L78.02,31.30 L77.08,31.35 L76.13,31.43 L75.20,31.53 L74.29,31.65 L73.39,31.78 L72.52,31.92 L71.67,32.06 L70.84,32.19 L70.05,32.32 L69.29,32.43 L68.57,32.53 L67.87,32.60 L67.17,32.67 L66.47,32.74 L65.82,32.80 L65.20,32.86 L64.60,32.91 L64.02,32.95 L63.45,32.98 L62.87,33.00 L62.28,33.01 L61.67,33.00 L61.04,32.97 L60.37,32.93 L59.64,32.85 L58.82,32.73 L57.93,32.58 L56.99,32.40 L56.03,32.21 L55.06,32.01 L54.12,31.81 L53.23,31.61 L52.39,31.43 L51.65,31.27 L51.00,31.15 L50.49,31.06 Z"/></g><g fill="#f5a233"><path d="M8.71,7.89 L8.65,8.11 L8.57,8.40 L8.47,8.76 L8.35,9.18 L8.22,9.64 L8.10,10.13 L7.98,10.65 L7.89,11.19 L7.82,11.75 L7.80,12.31 L7.83,12.88 L7.92,13.42 L8.06,13.92 L8.22,14.41 L8.42,14.91 L8.65,15.40 L8.90,15.89 L9.19,16.38 L9.51,16.86 L9.85,17.33 L10.23,17.79 L10.64,18.23 L11.07,18.66 L11.54,19.06 L12.05,19.44 L12.60,19.81 L13.18,20.16 L13.79,20.49 L14.42,20.81 L15.06,21.11 L15.72,21.39 L16.38,21.66 L17.05,21.91 L17.70,22.14 L18.34,22.35 L18.97,22.54 L19.58,22.71 L20.17,22.86 L20.75,22.99 L21.33,23.10 L21.92,23.19 L22.50,23.27 L23.10,23.33 L23.72,23.37 L24.35,23.41 L25.01,23.43 L25.70,23.44 L26.44,23.45 L27.26,23.43 L28.13,23.38 L29.05,23.31 L29.99,23.23 L30.94,23.13 L31.91,23.03 L32.86,22.92 L33.80,22.82 L34.71,22.74 L35.56,22.66 L36.36,22.61 L37.09,22.58 L37.78,22.56 L38.45,22.56 L39.09,22.56 L39.71,22.57 L40.29,22.59 L40.85,22.62 L41.37,22.65 L41.87,22.70 L42.35,22.76 L42.80,22.82 L43.22,22.90 L43.63,22.99 L44.00,23.08 L44.35,23.18 L44.66,23.29 L44.95,23.41 L45.21,23.53 L45.46,23.65 L45.68,23.78 L45.89,23.92 L46.09,24.07 L46.29,24.23 L46.48,24.40 L46.65,24.56 L46.78,24.71 L46.89,24.86 L47.00,25.03 L47.11,25.24 L47.22,25.48 L47.34,25.74 L47.46,26.04 L47.58,26.36 L47.71,26.71 L47.86,27.08 L48.02,27.47 L48.19,27.85 L48.35,28.22 L48.52,28.60 L48.70,29.01 L48.88,29.44 L49.06,29.88 L49.24,30.31 L49.41,30.73 L49.58,31.13 L49.73,31.50 L49.87,31.83 L49.98,32.12 L50.08,32.35 L53.92,30.65 L53.82,30.44 L53.70,30.17 L53.55,29.85 L53.39,29.48 L53.20,29.08 L53.01,28.66 L52.81,28.23 L52.60,27.79 L52.40,27.35 L52.19,26.92 L52.00,26.51 L51.81,26.15 L51.66,25.84 L51.52,25.53 L51.38,25.21 L51.23,24.87 L51.08,24.51 L50.91,24.14 L50.73,23.76 L50.52,23.38 L50.29,22.98 L50.01,22.59 L49.69,22.19 L49.35,21.84 L49.01,21.53 L48.68,21.26 L48.33,21.00 L47.96,20.75 L47.57,20.52 L47.17,20.31 L46.75,20.12 L46.31,19.94 L45.85,19.78 L45.38,19.64 L44.89,19.52 L44.37,19.41 L43.84,19.32 L43.30,19.25 L42.74,19.19 L42.17,19.14 L41.58,19.11 L40.98,19.10 L40.36,19.09 L39.72,19.10 L39.05,19.11 L38.37,19.14 L37.66,19.18 L36.91,19.22 L36.10,19.29 L35.24,19.39 L34.34,19.50 L33.41,19.63 L32.46,19.78 L31.50,19.92 L30.56,20.07 L29.63,20.20 L28.73,20.32 L27.88,20.43 L27.09,20.51 L26.36,20.55 L25.67,20.58 L25.02,20.60 L24.41,20.61 L23.83,20.60 L23.29,20.59 L22.76,20.56 L22.25,20.52 L21.74,20.46 L21.23,20.39 L20.72,20.30 L20.18,20.19 L19.63,20.06 L19.05,19.92 L18.45,19.75 L17.83,19.57 L17.21,19.37 L16.59,19.16 L15.97,18.93 L15.38,18.69 L14.80,18.43 L14.25,18.17 L13.74,17.90 L13.28,17.62 L12.86,17.34 L12.48,17.05 L12.11,16.73 L11.76,16.39 L11.44,16.03 L11.13,15.66 L10.85,15.28 L10.59,14.90 L10.35,14.50 L10.14,14.11 L9.96,13.72 L9.80,13.34 L9.68,12.98 L9.60,12.64 L9.55,12.26 L9.54,11.84 L9.56,11.38 L9.61,10.92 L9.68,10.44 L9.76,9.98 L9.85,9.54 L9.93,9.12 L10.00,8.73 L10.06,8.39 L10.09,8.11 Z"/><path d="M0.32,34.95 L0.76,34.80 L1.30,34.58 L1.91,34.31 L2.58,34.01 L3.32,33.67 L4.10,33.32 L4.91,32.96 L5.75,32.61 L6.59,32.26 L7.43,31.93 L8.25,31.64 L9.05,31.38 L9.86,31.14 L10.72,30.90 L11.61,30.67 L12.53,30.45 L13.46,30.23 L14.39,30.03 L15.32,29.84 L16.23,29.67 L17.11,29.52 L17.95,29.39 L18.75,29.28 L19.48,29.20 L20.15,29.15 L20.78,29.12 L21.36,29.12 L21.91,29.13 L22.44,29.16 L22.96,29.21 L23.47,29.27 L23.98,29.34 L24.50,29.42 L25.03,29.51 L25.59,29.61 L26.16,29.71 L26.72,29.81 L27.27,29.93 L27.82,30.06 L28.38,30.20 L28.95,30.36 L29.52,30.52 L30.09,30.69 L30.67,30.86 L31.26,31.04 L31.84,31.22 L32.44,31.39 L33.03,31.57 L33.60,31.74 L34.17,31.92 L34.74,32.10 L35.32,32.29 L35.90,32.49 L36.49,32.68 L37.09,32.88 L37.69,33.07 L38.30,33.26 L38.92,33.44 L39.54,33.61 L40.17,33.77 L40.80,33.92 L41.45,34.06 L42.09,34.19 L42.74,34.31 L43.39,34.43 L44.03,34.54 L44.65,34.64 L45.26,34.74 L45.84,34.83 L46.39,34.92 L46.91,35.00 L47.40,35.08 L47.88,35.15 L48.35,35.23 L48.80,35.29 L49.24,35.36 L49.66,35.41 L50.05,35.47 L50.42,35.51 L50.75,35.56 L51.06,35.60 L51.32,35.63 L51.55,35.66 L51.74,35.69 L52.26,31.11 L52.05,31.10 L51.80,31.08 L51.53,31.05 L51.23,31.03 L50.89,31.00 L50.54,30.97 L50.16,30.94 L49.76,30.90 L49.34,30.86 L48.91,30.82 L48.46,30.77 L48.00,30.72 L47.50,30.67 L46.96,30.61 L46.41,30.55 L45.83,30.49 L45.23,30.42 L44.62,30.35 L44.01,30.28 L43.40,30.20 L42.79,30.11 L42.19,30.02 L41.60,29.93 L41.03,29.83 L40.48,29.71 L39.92,29.59 L39.35,29.45 L38.78,29.31 L38.19,29.15 L37.61,28.99 L37.01,28.83 L36.41,28.66 L35.81,28.50 L35.20,28.34 L34.58,28.18 L33.97,28.03 L33.38,27.89 L32.79,27.75 L32.19,27.60 L31.60,27.46 L30.99,27.31 L30.38,27.17 L29.77,27.03 L29.15,26.90 L28.53,26.78 L27.90,26.67 L27.26,26.57 L26.64,26.49 L26.05,26.42 L25.48,26.36 L24.92,26.29 L24.35,26.24 L23.77,26.19 L23.18,26.16 L22.57,26.14 L21.94,26.14 L21.28,26.16 L20.60,26.21 L19.88,26.29 L19.12,26.40 L18.32,26.54 L17.47,26.71 L16.59,26.90 L15.68,27.12 L14.74,27.36 L13.80,27.62 L12.85,27.89 L11.90,28.18 L10.97,28.48 L10.07,28.79 L9.19,29.10 L8.35,29.42 L7.52,29.77 L6.67,30.16 L5.83,30.57 L4.99,31.01 L4.17,31.46 L3.38,31.90 L2.63,32.34 L1.93,32.76 L1.29,33.14 L0.73,33.49 L0.25,33.79 L-0.12,34.05 Z"/><path d="M29.44,45.05 L29.85,44.93 L30.35,44.75 L30.93,44.52 L31.56,44.26 L32.25,43.97 L32.97,43.68 L33.71,43.39 L34.46,43.12 L35.20,42.87 L35.92,42.65 L36.59,42.49 L37.20,42.38 L37.79,42.32 L38.36,42.29 L38.93,42.29 L39.51,42.33 L40.10,42.38 L40.70,42.45 L41.33,42.54 L41.98,42.63 L42.66,42.73 L43.38,42.83 L44.14,42.92 L44.92,42.99 L45.72,43.06 L46.57,43.15 L47.47,43.26 L48.40,43.37 L49.36,43.48 L50.33,43.59 L51.31,43.70 L52.28,43.79 L53.23,43.86 L54.16,43.92 L55.06,43.94 L55.91,43.92 L56.70,43.88 L57.46,43.81 L58.19,43.71 L58.89,43.60 L59.56,43.46 L60.20,43.31 L60.82,43.14 L61.42,42.97 L62.00,42.78 L62.56,42.58 L63.10,42.39 L63.66,42.18 L64.24,41.93 L64.82,41.65 L65.36,41.35 L65.87,41.05 L66.36,40.74 L66.81,40.44 L67.24,40.14 L67.65,39.87 L68.02,39.61 L68.38,39.39 L68.70,39.20 L69.00,39.03 L69.33,38.88 L69.68,38.72 L70.04,38.57 L70.40,38.42 L70.76,38.28 L71.11,38.15 L71.45,38.03 L71.78,37.92 L72.08,37.81 L72.36,37.71 L72.62,37.62 L72.83,37.54 L71.17,33.46 L71.00,33.54 L70.79,33.62 L70.53,33.73 L70.23,33.85 L69.89,33.99 L69.53,34.15 L69.13,34.31 L68.73,34.50 L68.31,34.69 L67.88,34.90 L67.44,35.12 L67.00,35.37 L66.54,35.64 L66.10,35.94 L65.67,36.24 L65.26,36.55 L64.87,36.85 L64.47,37.15 L64.09,37.44 L63.70,37.71 L63.32,37.97 L62.94,38.21 L62.56,38.42 L62.14,38.62 L61.68,38.83 L61.19,39.03 L60.71,39.23 L60.22,39.42 L59.72,39.60 L59.21,39.77 L58.69,39.92 L58.14,40.06 L57.58,40.19 L56.98,40.30 L56.35,40.40 L55.69,40.48 L54.98,40.53 L54.20,40.56 L53.36,40.56 L52.46,40.54 L51.53,40.51 L50.58,40.47 L49.62,40.42 L48.66,40.37 L47.71,40.31 L46.79,40.27 L45.91,40.23 L45.08,40.21 L44.33,40.19 L43.62,40.16 L42.93,40.11 L42.26,40.06 L41.59,40.02 L40.92,39.97 L40.26,39.94 L39.59,39.93 L38.91,39.95 L38.22,40.00 L37.52,40.09 L36.80,40.22 L36.05,40.42 L35.28,40.68 L34.50,40.99 L33.73,41.34 L32.97,41.70 L32.23,42.08 L31.53,42.46 L30.87,42.83 L30.27,43.17 L29.74,43.48 L29.30,43.73 L28.96,43.95 Z"/><path d="M47.31,9.32 L47.34,9.60 L47.35,9.97 L47.37,10.43 L47.39,10.96 L47.42,11.54 L47.47,12.16 L47.55,12.81 L47.65,13.46 L47.80,14.12 L48.01,14.77 L48.28,15.39 L48.63,15.96 L49.02,16.46 L49.44,16.93 L49.89,17.37 L50.39,17.79 L50.91,18.19 L51.47,18.57 L52.06,18.94 L52.68,19.29 L53.32,19.62 L53.99,19.93 L54.69,20.23 L55.43,20.52 L56.23,20.79 L57.10,21.02 L58.01,21.23 L58.95,21.41 L59.91,21.58 L60.88,21.73 L61.84,21.88 L62.78,22.03 L63.69,22.19 L64.54,22.35 L65.33,22.52 L66.04,22.71 L66.70,22.91 L67.33,23.12 L67.92,23.34 L68.49,23.57 L69.03,23.80 L69.56,24.03 L70.09,24.28 L70.61,24.53 L71.15,24.78 L71.69,25.05 L72.26,25.32 L72.84,25.59 L73.41,25.87 L73.98,26.14 L74.55,26.43 L75.12,26.73 L75.70,27.03 L76.28,27.34 L76.87,27.65 L77.46,27.95 L78.05,28.26 L78.65,28.57 L79.26,28.86 L79.86,29.15 L80.44,29.43 L80.99,29.69 L81.54,29.95 L82.09,30.21 L82.65,30.47 L83.21,30.73 L83.79,30.99 L84.39,31.24 L85.01,31.50 L85.67,31.76 L86.36,32.02 L87.09,32.28 L87.90,32.55 L88.79,32.84 L89.74,33.13 L90.74,33.43 L91.75,33.72 L92.76,34.01 L93.74,34.29 L94.68,34.55 L95.54,34.79 L96.30,35.00 L96.94,35.18 L97.43,35.33 L98.57,31.07 L98.05,30.95 L97.39,30.79 L96.61,30.61 L95.74,30.40 L94.81,30.18 L93.83,29.95 L92.82,29.71 L91.82,29.46 L90.84,29.21 L89.91,28.97 L89.06,28.74 L88.31,28.52 L87.64,28.31 L86.99,28.10 L86.39,27.89 L85.80,27.68 L85.24,27.46 L84.69,27.25 L84.15,27.03 L83.60,26.80 L83.06,26.57 L82.50,26.34 L81.93,26.09 L81.34,25.85 L80.76,25.60 L80.18,25.34 L79.60,25.08 L79.01,24.81 L78.42,24.53 L77.82,24.25 L77.22,23.97 L76.61,23.69 L76.00,23.41 L75.39,23.13 L74.77,22.86 L74.16,22.61 L73.58,22.36 L73.02,22.13 L72.47,21.89 L71.91,21.65 L71.35,21.41 L70.77,21.18 L70.18,20.95 L69.57,20.72 L68.92,20.50 L68.24,20.29 L67.53,20.09 L66.76,19.89 L65.93,19.71 L65.03,19.56 L64.11,19.44 L63.16,19.32 L62.19,19.22 L61.23,19.12 L60.28,19.01 L59.35,18.90 L58.46,18.78 L57.63,18.63 L56.86,18.47 L56.17,18.28 L55.52,18.06 L54.87,17.83 L54.25,17.58 L53.66,17.32 L53.11,17.05 L52.58,16.76 L52.09,16.47 L51.63,16.16 L51.21,15.84 L50.82,15.51 L50.47,15.17 L50.17,14.84 L49.93,14.49 L49.71,14.08 L49.53,13.60 L49.37,13.07 L49.24,12.51 L49.13,11.94 L49.04,11.37 L48.96,10.82 L48.90,10.30 L48.83,9.83 L48.77,9.41 L48.69,9.08 Z"/><path d="M74.26,12.27 L74.35,12.57 L74.47,12.95 L74.61,13.42 L74.77,13.95 L74.95,14.53 L75.16,15.14 L75.39,15.78 L75.65,16.43 L75.94,17.07 L76.27,17.70 L76.64,18.30 L77.05,18.85 L77.47,19.33 L77.91,19.79 L78.37,20.23 L78.86,20.65 L79.37,21.05 L79.91,21.44 L80.47,21.82 L81.06,22.19 L81.67,22.56 L82.31,22.91 L82.98,23.27 L83.69,23.63 L84.46,23.99 L85.30,24.35 L86.19,24.71 L87.12,25.06 L88.07,25.41 L89.03,25.75 L90.00,26.08 L90.95,26.39 L91.88,26.69 L92.77,26.97 L93.60,27.24 L94.38,27.48 L95.10,27.71 L95.78,27.92 L96.44,28.11 L97.06,28.29 L97.67,28.46 L98.26,28.61 L98.85,28.75 L99.42,28.88 L100.00,29.00 L100.58,29.12 L101.18,29.22 L101.79,29.32 L102.45,29.40 L103.14,29.47 L103.85,29.53 L104.56,29.57 L105.26,29.60 L105.94,29.63 L106.59,29.64 L107.20,29.66 L107.76,29.67 L108.25,29.68 L108.65,29.69 L108.97,29.70 L109.03,25.90 L108.68,25.90 L108.24,25.91 L107.74,25.93 L107.18,25.94 L106.59,25.96 L105.96,25.97 L105.32,25.98 L104.66,25.98 L104.01,25.98 L103.38,25.96 L102.77,25.93 L102.21,25.88 L101.66,25.82 L101.12,25.76 L100.59,25.68 L100.06,25.60 L99.53,25.51 L98.99,25.40 L98.43,25.29 L97.86,25.16 L97.25,25.02 L96.62,24.87 L95.94,24.70 L95.22,24.52 L94.44,24.32 L93.60,24.10 L92.70,23.86 L91.78,23.62 L90.83,23.36 L89.87,23.09 L88.92,22.81 L87.98,22.53 L87.08,22.24 L86.22,21.95 L85.43,21.66 L84.71,21.37 L84.03,21.08 L83.39,20.79 L82.77,20.49 L82.20,20.20 L81.65,19.90 L81.13,19.59 L80.64,19.28 L80.18,18.96 L79.74,18.63 L79.32,18.28 L78.92,17.92 L78.55,17.55 L78.21,17.16 L77.89,16.71 L77.58,16.21 L77.28,15.66 L77.00,15.09 L76.74,14.52 L76.50,13.95 L76.28,13.41 L76.07,12.90 L75.88,12.44 L75.70,12.04 L75.54,11.73 Z"/><path d="M49.51,34.94 L49.98,35.10 L50.58,35.30 L51.29,35.54 L52.11,35.80 L53.00,36.08 L53.94,36.37 L54.91,36.66 L55.90,36.94 L56.88,37.22 L57.85,37.47 L58.77,37.69 L59.63,37.87 L60.43,38.02 L61.18,38.14 L61.91,38.25 L62.61,38.33 L63.30,38.40 L63.98,38.45 L64.65,38.49 L65.32,38.52 L65.99,38.55 L66.67,38.56 L67.37,38.58 L68.13,38.60 L68.95,38.60 L69.81,38.58 L70.67,38.54 L71.53,38.49 L72.38,38.43 L73.23,38.38 L74.07,38.33 L74.90,38.29 L75.71,38.26 L76.49,38.25 L77.24,38.26 L77.98,38.30 L78.73,38.36 L79.52,38.43 L80.31,38.52 L81.11,38.62 L81.92,38.73 L82.73,38.85 L83.53,38.99 L84.32,39.13 L85.10,39.28 L85.87,39.43 L86.62,39.59 L87.32,39.74 L87.97,39.86 L88.58,39.99 L89.18,40.12 L89.78,40.27 L90.37,40.43 L90.98,40.60 L91.60,40.78 L92.25,40.96 L92.92,41.15 L93.62,41.34 L94.36,41.52 L95.10,41.70 L95.84,41.84 L96.57,41.99 L97.33,42.14 L98.10,42.30 L98.89,42.45 L99.69,42.60 L100.50,42.75 L101.31,42.89 L102.13,43.02 L102.94,43.14 L103.76,43.24 L104.53,43.32 L105.26,43.39 L105.98,43.45 L106.71,43.52 L107.46,43.58 L108.22,43.63 L109.00,43.67 L109.79,43.68 L110.59,43.67 L111.40,43.63 L112.23,43.54 L113.06,43.39 L113.89,43.19 L114.68,42.92 L115.43,42.62 L116.16,42.28 L116.87,41.90 L117.54,41.48 L118.20,41.04 L118.82,40.56 L119.40,40.04 L119.96,39.49 L120.47,38.90 L120.95,38.26 L121.37,37.53 L121.69,36.73 L121.89,35.92 L122.01,35.13 L122.04,34.36 L122.01,33.61 L121.92,32.87 L121.78,32.16 L121.58,31.46 L121.33,30.78 L121.03,30.12 L120.66,29.48 L120.21,28.87 L119.69,28.31 L119.13,27.83 L118.55,27.41 L117.94,27.05 L117.31,26.73 L116.67,26.45 L116.02,26.20 L115.36,25.99 L114.69,25.82 L114.03,25.69 L113.36,25.60 L112.66,25.56 L111.89,25.57 L111.14,25.66 L110.42,25.82 L109.73,26.02 L109.07,26.24 L108.44,26.48 L107.85,26.72 L107.30,26.96 L106.82,27.18 L106.41,27.36 L106.11,27.50 L105.87,27.60 L107.13,31.40 L107.47,31.31 L107.90,31.17 L108.36,31.01 L108.84,30.83 L109.35,30.65 L109.88,30.48 L110.40,30.32 L110.90,30.19 L111.37,30.09 L111.78,30.03 L112.10,30.02 L112.34,30.04 L112.62,30.12 L112.98,30.24 L113.36,30.38 L113.75,30.55 L114.14,30.74 L114.51,30.95 L114.86,31.18 L115.17,31.41 L115.43,31.64 L115.62,31.85 L115.74,32.02 L115.79,32.13 L115.81,32.25 L115.86,32.43 L115.90,32.66 L115.94,32.92 L115.95,33.20 L115.95,33.49 L115.93,33.76 L115.88,34.01 L115.82,34.22 L115.75,34.38 L115.68,34.46 L115.63,34.47 L115.57,34.52 L115.45,34.65 L115.25,34.83 L115.00,35.04 L114.70,35.26 L114.37,35.48 L114.00,35.69 L113.62,35.89 L113.22,36.06 L112.83,36.21 L112.45,36.33 L112.11,36.41 L111.79,36.47 L111.42,36.50 L111.00,36.51 L110.52,36.51 L110.00,36.48 L109.44,36.43 L108.84,36.37 L108.21,36.29 L107.55,36.19 L106.86,36.09 L106.16,35.98 L105.47,35.88 L104.81,35.77 L104.15,35.65 L103.47,35.51 L102.76,35.36 L102.04,35.20 L101.31,35.02 L100.57,34.84 L99.82,34.65 L99.08,34.46 L98.34,34.27 L97.60,34.08 L96.90,33.90 L96.25,33.75 L95.64,33.60 L95.03,33.43 L94.42,33.26 L93.79,33.08 L93.14,32.90 L92.48,32.71 L91.78,32.53 L91.05,32.35 L90.29,32.17 L89.49,32.00 L88.68,31.86 L87.86,31.77 L87.03,31.68 L86.18,31.60 L85.31,31.52 L84.42,31.46 L83.52,31.40 L82.62,31.35 L81.70,31.31 L80.78,31.28 L79.86,31.27 L78.95,31.28 L78.02,31.30 L77.08,31.35 L76.13,31.43 L75.20,31.53 L74.29,31.65 L73.39,31.78 L72.52,31.92 L71.67,32.06 L70.84,32.19 L70.05,32.32 L69.29,32.43 L68.57,32.53 L67.87,32.60 L67.17,32.67 L66.47,32.74 L65.82,32.80 L65.20,32.86 L64.60,32.91 L64.02,32.95 L63.45,32.98 L62.87,33.00 L62.28,33.01 L61.67,33.00 L61.04,32.97 L60.37,32.93 L59.64,32.85 L58.82,32.73 L57.93,32.58 L56.99,32.40 L56.03,32.21 L55.06,32.01 L54.12,31.81 L53.23,31.61 L52.39,31.43 L51.65,31.27 L51.00,31.15 L50.49,31.06 Z"/></g><g transform="translate(0,50) skewX(-19) translate(0,-50)"><path d="M89.50,12 H99.00 V36 H89.50 Z" fill="#f3a43a" stroke="#f3a43a" stroke-width="2.2"/><path d="M89.50,12 H99.00 V36.6 H89.50 Z" fill="#e0363a"/></g></svg>
<div class="a" style="left:17px;top:157px;width:772px;height:431px;border-radius:13px;background:#7094cc;box-shadow:inset 6px 6px 6px -2px #d4e0f4, inset -3px -3px 4px -1px #5c7cbc, 0 0 0 0.8px #e4ecf8"></div>
<div class="a" style="left:29px;top:169px;width:749px;height:408px;border-radius:12px;background:linear-gradient(135deg,#f3f3f3,#fbfbfc 50%,#fdfdfe);border:1px solid #3f4f72;box-shadow:inset 2px 3px 4px #d0d0d0"></div>
<svg class="a" style="left:0;top:0" width="1069" height="620" font-family="Liberation Sans">
<g fill="none" stroke="#777" stroke-width="1.1">
<circle cx="40.7" cy="180.7" r="4"/><line x1="37.8" y1="183.6" x2="43.6" y2="177.8"/>
<circle cx="768" cy="180.7" r="4"/><line x1="765.1" y1="183.6" x2="770.9" y2="177.8"/>
<circle cx="40.7" cy="567.2" r="4"/><line x1="37.8" y1="570.1" x2="43.6" y2="564.3"/>
<circle cx="768" cy="567.2" r="4"/><line x1="765.1" y1="570.1" x2="770.9" y2="564.3"/>
</g>
<text x="404" y="211" text-anchor="middle" font-size="16.5" font-weight="bold" fill="#1a1a1a">Consumption</text>
<text x="431.9" y="545" text-anchor="middle" font-size="14.2" font-weight="bold" fill="#1a1a1a">Date/Time</text>
<text transform="translate(85.9,338.5) rotate(-90)" text-anchor="middle" font-size="14" font-weight="bold" fill="#1a1a1a">Gallons ( x1)</text>
<rect x="127.00" y="237.0" width="129.18" height="203.0" fill="#cccccc"/>
<rect x="256.18" y="237.0" width="129.18" height="203.0" fill="#ffffff"/>
<rect x="385.36" y="237.0" width="129.18" height="203.0" fill="#cccccc"/>
<rect x="514.55" y="237.0" width="129.18" height="203.0" fill="#ffffff"/>
<rect x="643.73" y="237.0" width="92.27" height="203.0" fill="#cccccc"/>
<line x1="127.0" y1="252.62" x2="736.0" y2="252.62" stroke="#a8a8a8" stroke-width="1" opacity="0.7"/>
<line x1="127.0" y1="268.23" x2="736.0" y2="268.23" stroke="#a8a8a8" stroke-width="1" opacity="0.7"/>
<line x1="127.0" y1="283.85" x2="736.0" y2="283.85" stroke="#a8a8a8" stroke-width="1" opacity="0.7"/>
<line x1="127.0" y1="299.46" x2="736.0" y2="299.46" stroke="#a8a8a8" stroke-width="1" opacity="0.7"/>
<line x1="127.0" y1="315.08" x2="736.0" y2="315.08" stroke="#a8a8a8" stroke-width="1" opacity="0.7"/>
<line x1="127.0" y1="330.69" x2="736.0" y2="330.69" stroke="#a8a8a8" stroke-width="1" opacity="0.7"/>
<line x1="127.0" y1="346.31" x2="736.0" y2="346.31" stroke="#a8a8a8" stroke-width="1" opacity="0.7"/>
<line x1="127.0" y1="361.92" x2="736.0" y2="361.92" stroke="#a8a8a8" stroke-width="1" opacity="0.7"/>
<line x1="127.0" y1="377.54" x2="736.0" y2="377.54" stroke="#a8a8a8" stroke-width="1" opacity="0.7"/>
<line x1="127.0" y1="393.15" x2="736.0" y2="393.15" stroke="#a8a8a8" stroke-width="1" opacity="0.7"/>
<line x1="127.0" y1="408.77" x2="736.0" y2="408.77" stroke="#a8a8a8" stroke-width="1" opacity="0.7"/>
<line x1="127.0" y1="424.38" x2="736.0" y2="424.38" stroke="#a8a8a8" stroke-width="1" opacity="0.7"/>
<rect x="127.0" y="420.09" width="609.0" height="9.37" fill="#f2ea3a"/>
<rect x="136.95" y="423.18" width="17" height="2.4" fill="#2d3f66"/>
<circle cx="145.75" cy="424.48" r="2" fill="#e8447a"/>
<rect x="156.26" y="264.53" width="15.3" height="160.66" fill="#4459a7" stroke="#2c3e6a" stroke-width="2.0"/>
<circle cx="164.21" cy="264.43" r="2" fill="#e8447a"/>
<rect x="174.71" y="295.76" width="15.3" height="129.43" fill="#4459a7" stroke="#2c3e6a" stroke-width="2.0"/>
<circle cx="182.66" cy="295.66" r="2" fill="#e8447a"/>
<rect x="193.17" y="303.57" width="15.3" height="121.62" fill="#4459a7" stroke="#2c3e6a" stroke-width="2.0"/>
<circle cx="201.12" cy="303.47" r="2" fill="#e8447a"/>
<rect x="211.62" y="307.47" width="15.3" height="117.72" fill="#4459a7" stroke="#2c3e6a" stroke-width="2.0"/>
<circle cx="219.57" cy="307.37" r="2" fill="#e8447a"/>
<rect x="230.08" y="299.66" width="15.3" height="125.52" fill="#4459a7" stroke="#2c3e6a" stroke-width="2.0"/>
<circle cx="238.03" cy="299.56" r="2" fill="#e8447a"/>
<rect x="248.53" y="338.70" width="15.3" height="86.48" fill="#4459a7" stroke="#2c3e6a" stroke-width="2.0"/>
<circle cx="256.48" cy="338.60" r="2" fill="#e8447a"/>
<rect x="266.99" y="252.82" width="15.3" height="172.37" fill="#4459a7" stroke="#2c3e6a" stroke-width="2.0"/>
<circle cx="274.94" cy="252.72" r="2" fill="#e8447a"/>
<rect x="285.44" y="323.08" width="15.3" height="102.10" fill="#4459a7" stroke="#2c3e6a" stroke-width="2.0"/>
<circle cx="293.39" cy="322.98" r="2" fill="#e8447a"/>
<rect x="303.90" y="323.08" width="15.3" height="102.10" fill="#4459a7" stroke="#2c3e6a" stroke-width="2.0"/>
<circle cx="311.85" cy="322.98" r="2" fill="#e8447a"/>
<rect x="322.35" y="303.57" width="15.3" height="121.62" fill="#4459a7" stroke="#2c3e6a" stroke-width="2.0"/>
<circle cx="330.30" cy="303.47" r="2" fill="#e8447a"/>
<rect x="340.80" y="280.14" width="15.3" height="145.04" fill="#4459a7" stroke="#2c3e6a" stroke-width="2.0"/>
<circle cx="348.75" cy="280.04" r="2" fill="#e8447a"/>
<rect x="359.26" y="354.32" width="15.3" height="70.87" fill="#4459a7" stroke="#2c3e6a" stroke-width="2.0"/>
<circle cx="367.21" cy="354.22" r="2" fill="#e8447a"/>
<rect x="377.71" y="299.66" width="15.3" height="125.52" fill="#4459a7" stroke="#2c3e6a" stroke-width="2.0"/>
<circle cx="385.66" cy="299.56" r="2" fill="#e8447a"/>
<rect x="396.17" y="295.76" width="15.3" height="129.43" fill="#4459a7" stroke="#2c3e6a" stroke-width="2.0"/>
<circle cx="404.12" cy="295.66" r="2" fill="#e8447a"/>
<rect x="414.62" y="307.47" width="15.3" height="117.72" fill="#4459a7" stroke="#2c3e6a" stroke-width="2.0"/>
<circle cx="422.57" cy="307.37" r="2" fill="#e8447a"/>
<rect x="433.08" y="299.66" width="15.3" height="125.52" fill="#4459a7" stroke="#2c3e6a" stroke-width="2.0"/>
<circle cx="441.03" cy="299.56" r="2" fill="#e8447a"/>
<rect x="451.53" y="287.95" width="15.3" height="137.23" fill="#4459a7" stroke="#2c3e6a" stroke-width="2.0"/>
<circle cx="459.48" cy="287.85" r="2" fill="#e8447a"/>
<rect x="469.99" y="276.24" width="15.3" height="148.95" fill="#4459a7" stroke="#2c3e6a" stroke-width="2.0"/>
<circle cx="477.94" cy="276.14" r="2" fill="#e8447a"/>
<rect x="488.44" y="299.66" width="15.3" height="125.52" fill="#4459a7" stroke="#2c3e6a" stroke-width="2.0"/>
<circle cx="496.39" cy="299.56" r="2" fill="#e8447a"/>
<rect x="506.90" y="338.70" width="15.3" height="86.48" fill="#4459a7" stroke="#2c3e6a" stroke-width="2.0"/>
<circle cx="514.85" cy="338.60" r="2" fill="#e8447a"/>
<rect x="525.35" y="256.72" width="15.3" height="168.47" fill="#4459a7" stroke="#2c3e6a" stroke-width="2.0"/>
<circle cx="533.30" cy="256.62" r="2" fill="#e8447a"/>
<rect x="543.80" y="287.95" width="15.3" height="137.23" fill="#4459a7" stroke="#2c3e6a" stroke-width="2.0"/>
<circle cx="551.75" cy="287.85" r="2" fill="#e8447a"/>
<rect x="562.26" y="276.24" width="15.3" height="148.95" fill="#4459a7" stroke="#2c3e6a" stroke-width="2.0"/>
<circle cx="570.21" cy="276.14" r="2" fill="#e8447a"/>
<rect x="580.71" y="272.33" width="15.3" height="152.85" fill="#4459a7" stroke="#2c3e6a" stroke-width="2.0"/>
<circle cx="588.66" cy="272.23" r="2" fill="#e8447a"/>
<rect x="599.17" y="315.28" width="15.3" height="109.91" fill="#4459a7" stroke="#2c3e6a" stroke-width="2.0"/>
<circle cx="607.12" cy="315.18" r="2" fill="#e8447a"/>
<rect x="617.62" y="287.95" width="15.3" height="137.23" fill="#4459a7" stroke="#2c3e6a" stroke-width="2.0"/>
<circle cx="625.57" cy="287.85" r="2" fill="#e8447a"/>
<rect x="636.08" y="284.05" width="15.3" height="141.14" fill="#4459a7" stroke="#2c3e6a" stroke-width="2.0"/>
<circle cx="644.03" cy="283.95" r="2" fill="#e8447a"/>
<rect x="654.53" y="295.76" width="15.3" height="129.43" fill="#4459a7" stroke="#2c3e6a" stroke-width="2.0"/>
<circle cx="662.48" cy="295.66" r="2" fill="#e8447a"/>
<rect x="672.99" y="284.05" width="15.3" height="141.14" fill="#4459a7" stroke="#2c3e6a" stroke-width="2.0"/>
<circle cx="680.94" cy="283.95" r="2" fill="#e8447a"/>
<rect x="691.44" y="291.85" width="15.3" height="133.33" fill="#4459a7" stroke="#2c3e6a" stroke-width="2.0"/>
<circle cx="699.39" cy="291.75" r="2" fill="#e8447a"/>
<rect x="709.90" y="389.45" width="15.3" height="35.73" fill="#4459a7" stroke="#2c3e6a" stroke-width="2.0"/>
<circle cx="717.85" cy="389.35" r="2" fill="#e8447a"/>
<rect x="736.5" y="239.0" width="2" height="203.0" fill="#bbbbbb" opacity="0.6"/>
<rect x="129.0" y="440.5" width="609.0" height="2" fill="#bbbbbb" opacity="0.6"/>
<rect x="127.0" y="237.0" width="609.0" height="203.0" fill="none" stroke="#28324c" stroke-width="1.5"/>
<line x1="127.0" y1="237.0" x2="127.0" y2="447.0" stroke="#222" stroke-width="1.5"/>
<line x1="127.0" y1="440.0" x2="736.0" y2="440.0" stroke="#222" stroke-width="2"/>
<line x1="119.0" y1="237.00" x2="127.0" y2="237.00" stroke="#222" stroke-width="1.3"/>
<text x="116.5" y="241.60" text-anchor="end" font-size="13" fill="#222">48</text>
<line x1="119.0" y1="252.62" x2="127.0" y2="252.62" stroke="#222" stroke-width="1.3"/>
<text x="116.5" y="257.22" text-anchor="end" font-size="13" fill="#222">44</text>
<line x1="119.0" y1="268.23" x2="127.0" y2="268.23" stroke="#222" stroke-width="1.3"/>
<text x="116.5" y="272.83" text-anchor="end" font-size="13" fill="#222">40</text>
<line x1="119.0" y1="283.85" x2="127.0" y2="283.85" stroke="#222" stroke-width="1.3"/>
<text x="116.5" y="288.45" text-anchor="end" font-size="13" fill="#222">36</text>
<line x1="119.0" y1="299.46" x2="127.0" y2="299.46" stroke="#222" stroke-width="1.3"/>
<text x="116.5" y="304.06" text-anchor="end" font-size="13" fill="#222">32</text>
<line x1="119.0" y1="315.08" x2="127.0" y2="315.08" stroke="#222" stroke-width="1.3"/>
<text x="116.5" y="319.68" text-anchor="end" font-size="13" fill="#222">28</text>
<line x1="119.0" y1="330.69" x2="127.0" y2="330.69" stroke="#222" stroke-width="1.3"/>
<text x="116.5" y="335.29" text-anchor="end" font-size="13" fill="#222">24</text>
<line x1="119.0" y1="346.31" x2="127.0" y2="346.31" stroke="#222" stroke-width="1.3"/>
<text x="116.5" y="350.91" text-anchor="end" font-size="13" fill="#222">20</text>
<line x1="119.0" y1="361.92" x2="127.0" y2="361.92" stroke="#222" stroke-width="1.3"/>
<text x="116.5" y="366.52" text-anchor="end" font-size="13" fill="#222">16</text>
<line x1="119.0" y1="377.54" x2="127.0" y2="377.54" stroke="#222" stroke-width="1.3"/>
<text x="116.5" y="382.14" text-anchor="end" font-size="13" fill="#222">12</text>
<line x1="119.0" y1="393.15" x2="127.0" y2="393.15" stroke="#222" stroke-width="1.3"/>
<text x="116.5" y="397.75" text-anchor="end" font-size="13" fill="#222">8</text>
<line x1="119.0" y1="408.77" x2="127.0" y2="408.77" stroke="#222" stroke-width="1.3"/>
<text x="116.5" y="413.37" text-anchor="end" font-size="13" fill="#222">4</text>
<line x1="119.0" y1="424.38" x2="127.0" y2="424.38" stroke="#222" stroke-width="1.3"/>
<text x="116.5" y="428.98" text-anchor="end" font-size="13" fill="#222">0</text>
<line x1="119.0" y1="440.00" x2="127.0" y2="440.00" stroke="#222" stroke-width="1.3"/>
<text x="116.5" y="444.60" text-anchor="end" font-size="13" fill="#222">-4</text>
<line x1="127.00" y1="440.0" x2="127.00" y2="447.0" stroke="#222" stroke-width="1.3"/>
<line x1="256.18" y1="440.0" x2="256.18" y2="447.0" stroke="#222" stroke-width="1.3"/>
<line x1="385.36" y1="440.0" x2="385.36" y2="447.0" stroke="#222" stroke-width="1.3"/>
<line x1="514.55" y1="440.0" x2="514.55" y2="447.0" stroke="#222" stroke-width="1.3"/>
<line x1="643.73" y1="440.0" x2="643.73" y2="447.0" stroke="#222" stroke-width="1.3"/>
<text transform="translate(123.40,449) rotate(90)" font-size="10.3" fill="#222">Sun,May-03-09</text>
<text transform="translate(141.85,449) rotate(90)" font-size="10.3" fill="#222">Mon,May-04-09</text>
<text transform="translate(160.31,449) rotate(90)" font-size="10.3" fill="#222">Tue,May-05-09</text>
<text transform="translate(178.76,449) rotate(90)" font-size="10.3" fill="#222">Wed,May-06-09</text>
<text transform="translate(197.22,449) rotate(90)" font-size="10.3" fill="#222">Thu,May-07-09</text>
<text transform="translate(215.67,449) rotate(90)" font-size="10.3" fill="#222">Fri,May-08-09</text>
<text transform="translate(234.13,449) rotate(90)" font-size="10.3" fill="#222">Sat,May-09-09</text>
<text transform="translate(252.58,449) rotate(90)" font-size="10.3" fill="#222">Sun,May-10-09</text>
<text transform="translate(271.04,449) rotate(90)" font-size="10.3" fill="#222">Mon,May-11-09</text>
<text transform="translate(289.49,449) rotate(90)" font-size="10.3" fill="#222">Tue,May-12-09</text>
<text transform="translate(307.95,449) rotate(90)" font-size="10.3" fill="#222">Wed,May-13-09</text>
<text transform="translate(326.40,449) rotate(90)" font-size="10.3" fill="#222">Thu,May-14-09</text>
<text transform="translate(344.85,449) rotate(90)" font-size="10.3" fill="#222">Fri,May-15-09</text>
<text transform="translate(363.31,449) rotate(90)" font-size="10.3" fill="#222">Sat,May-16-09</text>
<text transform="translate(381.76,449) rotate(90)" font-size="10.3" fill="#222">Sun,May-17-09</text>
<text transform="translate(400.22,449) rotate(90)" font-size="10.3" fill="#222">Mon,May-18-09</text>
<text transform="translate(418.67,449) rotate(90)" font-size="10.3" fill="#222">Tue,May-19-09</text>
<text transform="translate(437.13,449) rotate(90)" font-size="10.3" fill="#222">Wed,May-20-09</text>
<text transform="translate(455.58,449) rotate(90)" font-size="10.3" fill="#222">Thu,May-21-09</text>
<text transform="translate(474.04,449) rotate(90)" font-size="10.3" fill="#222">Fri,May-22-09</text>
<text transform="translate(492.49,449) rotate(90)" font-size="10.3" fill="#222">Sat,May-23-09</text>
<text transform="translate(510.95,449) rotate(90)" font-size="10.3" fill="#222">Sun,May-24-09</text>
<text transform="translate(529.40,449) rotate(90)" font-size="10.3" fill="#222">Mon,May-25-09</text>
<text transform="translate(547.85,449) rotate(90)" font-size="10.3" fill="#222">Tue,May-26-09</text>
<text transform="translate(566.31,449) rotate(90)" font-size="10.3" fill="#222">Wed,May-27-09</text>
<text transform="translate(584.76,449) rotate(90)" font-size="10.3" fill="#222">Thu,May-28-09</text>
<text transform="translate(603.22,449) rotate(90)" font-size="10.3" fill="#222">Fri,May-29-09</text>
<text transform="translate(621.67,449) rotate(90)" font-size="10.3" fill="#222">Sat,May-30-09</text>
<text transform="translate(640.13,449) rotate(90)" font-size="10.3" fill="#222">Sun,May-31-09</text>
<text transform="translate(658.58,449) rotate(90)" font-size="10.3" fill="#222">Mon,Jun-01-09</text>
<text transform="translate(677.04,449) rotate(90)" font-size="10.3" fill="#222">Tue,Jun-02-09</text>
<text transform="translate(695.49,449) rotate(90)" font-size="10.3" fill="#222">Wed,Jun-03-09</text>
<text transform="translate(713.95,449) rotate(90)" font-size="10.3" fill="#222">Thu,Jun-04-09</text>
<text transform="translate(732.40,449) rotate(90)" font-size="10.3" fill="#222">Fri,Jun-05-09</text>
</svg>
</body></html>
